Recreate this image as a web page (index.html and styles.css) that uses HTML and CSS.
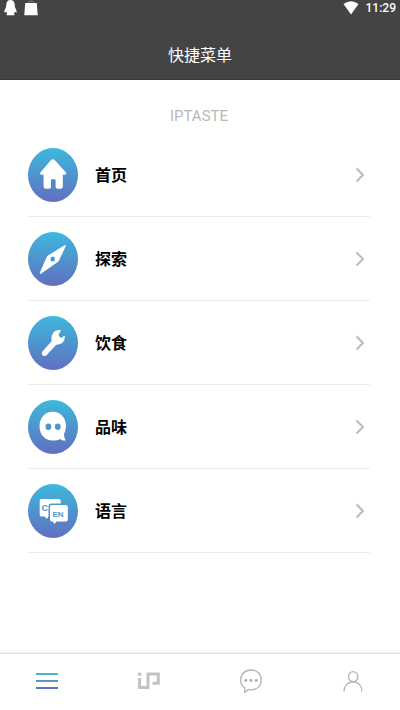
FILE: index.html
```html
<!DOCTYPE html>
<html lang="zh-CN">
<head>
<meta charset="utf-8">
<meta name="viewport" content="width=device-width, initial-scale=1">
<title>快捷菜单</title>
<link rel="stylesheet" href="styles.css">
</head>
<body>
<header class="header">
  <div class="status">
    <div class="status-group">
      <svg width="13" height="16" viewBox="0 0 13 16" fill="#fff" aria-hidden="true"><path d="M6.500 0C3.500 0 2.300 2 2.300 5L1.900 7.500C.8 9.500 .3 11 .3 12.300c.7.500 1.300-.2 2-.8.200 1 .6 1.700 1 2.200-.7.400-.8.900-.6 1.500h7.800c.2-.6.100-1.100-.6-1.500.4-.5.8-1.200 1-2.200.7.600 1.300 1.300 1.800.8 0-1.300-.5-2.800-1.600-4.800L10.700 5C10.700 2 9.500 0 6.500 0z"/></svg>
      <svg width="14" height="16" viewBox="0 0 14 16" aria-hidden="true"><path d="M1.200 3h11.600l.9 12.200H.3z" fill="#fff"/><path d="M4 3C4.500.5 9.500.5 10 3" fill="none" stroke="#888"/></svg>
    </div>
    <div class="status-group">
      <svg width="16" height="16" viewBox="0 0 16 16" fill="#fff" aria-hidden="true"><path d="M.5 4Q8-1.500 15.500 4L8 14.500z"/></svg>
      <span class="clock">11:29</span>
    </div>
  </div>
  <h1 class="title">快捷菜单</h1>
</header>

<main class="main">
  <h2 class="brand">IPTASTE</h2>
  <nav class="menu" aria-label="快捷菜单">
    <a class="item" href="#home">
      <span class="badge"><svg viewBox="0 0 49 54" aria-hidden="true"><path d="M22.300 12.200q2-1.700 4 0L37.500 24.500q.9 2-1.200 2.200h-2V38.500q0 2.200-2.200 2.200h-3q-2 0-2-2V32q0-.8-.8-.8h-3q-.8 0-.8.800v6.700q0 2-2 2h-3.200q-2.200 0-2.200-2.200V26.700h-2q-2.300-.2-1.200-2.200z"/></svg></span>
      <span class="label">首页</span>
      <svg class="arrow" viewBox="0 0 10 16" aria-hidden="true"><path d="M1.500 1.500 8 8l-6.500 6.500"/></svg>
    </a>
    <a class="item" href="#explore">
      <span class="badge"><svg viewBox="0 0 49 54" aria-hidden="true"><path fill-rule="evenodd" d="M36 13.200q1.500-.5 1.100 1.200L30.500 28.500q-.3.800-.9 1.200L12.800 41.500q-1.800.8-1.400-1L18.200 25q.3-.7.900-1.200zM24.200 24.600a2.300 2.500 0 1 0 0 5 2.300 2.500 0 1 0 0-5z"/></svg></span>
      <span class="label">探索</span>
      <svg class="arrow" viewBox="0 0 10 16" aria-hidden="true"><path d="M1.500 1.500 8 8l-6.500 6.500"/></svg>
    </a>
    <a class="item" href="#food">
      <span class="badge"><svg viewBox="0 0 49 54" aria-hidden="true"><path d="M32.500 14.500 30.400 18q-.5.700 0 1.400l1.300 2q.6.700 1.400.3l3.100-2.100c.7 4.700-2 8.700-6.300 8.800-1.300 0-2 .1-2.700.9L18 39.200c-2.700 2.500-6.100-.9-4.100-3.700l8.500-9.500c.7-.8.700-1.500.6-2.600-.5-5.900 4.300-10.700 9.500-8.900z"/></svg></span>
      <span class="label">饮食</span>
      <svg class="arrow" viewBox="0 0 10 16" aria-hidden="true"><path d="M1.500 1.500 8 8l-6.500 6.500"/></svg>
    </a>
    <a class="item" href="#taste">
      <span class="badge"><svg viewBox="0 0 49 54" aria-hidden="true"><path fill-rule="evenodd" d="M24.200 11.800c7.500 0 13.300 6 13.300 14.200 0 3.200-.8 5.700-2 8 .1 2.500.5 4.200 1.700 5.700.3.700-.2 1-1 .9-2 0-3.300-.5-4.500-1.500-2 1-4.500 1.500-7.500 1.500C16.500 40.600 11 34.500 11 26.200s5.700-14.400 13.200-14.400zM19.900 23.600a2.900 3.200 0 1 0 0 6.400 2.900 3.200 0 1 0 0-6.400zM29.300 23.600a2.900 3.200 0 1 0 0 6.400 2.900 3.200 0 1 0 0-6.400z"/></svg></span>
      <span class="label">品味</span>
      <svg class="arrow" viewBox="0 0 10 16" aria-hidden="true"><path d="M1.500 1.500 8 8l-6.500 6.500"/></svg>
    </a>
    <a class="item" href="#language">
      <span class="badge"><svg viewBox="0 0 49 54" aria-hidden="true"><path d="M13 15h17.500q1.700 0 1.700 1.800v2.700H23q-3 0-3 3.300v9.700l-1.700 2.500-2-2.500H13q-1.800 0-1.800-2V17q0-2 1.800-2z"/><path d="M23.300 20.900h14q2 0 2 2v12.700q0 2-2 2H28l-2 2.500-1.700-2.500h-1q-1.800 0-1.800-2V22.900q0-2 1.800-2z"/><text class="glyph-c" x="13" y="27">C</text><text class="glyph-en" x="24" y="32.500">EN</text></svg></span>
      <span class="label">语言</span>
      <svg class="arrow" viewBox="0 0 10 16" aria-hidden="true"><path d="M1.500 1.500 8 8l-6.500 6.500"/></svg>
    </a>
  </nav>
</main>

<nav class="tabs" aria-label="主导航">
  <a class="tab" href="#menu" aria-label="菜单">
    <svg width="24" height="26" viewBox="0 0 24 26" aria-hidden="true"><path d="M1 6h22" stroke="#50b1cd" stroke-width="2"/><path d="M1 13h22" stroke="#5b96c4" stroke-width="2"/><path d="M1 20h22" stroke="#6476b5" stroke-width="2"/></svg>
  </a>
  <a class="tab" href="#ip" aria-label="IP">
    <svg width="24" height="26" viewBox="0 0 24 26" fill="none" stroke="#c2c2c2" stroke-width="3" aria-hidden="true"><path d="M1 6.200h3.500M2.600 10v9.400H11V5.900h10.300v9.300h-5.800"/></svg>
  </a>
  <a class="tab" href="#messages" aria-label="消息">
    <svg width="24" height="26" viewBox="0 0 24 26" fill="none" stroke="#b4b4b4" stroke-width="1.300" aria-hidden="true"><path d="M5.800 19.800C3 18 1.700 15.300 1.700 12 1.700 6.100 6 2 12 2s10.300 4.100 10.300 10S18 21.800 12 21.800c-1 0-1.800-.1-2.600-.4L5.700 24.500z" stroke-linejoin="round"/><g fill="#aaa" stroke="none"><circle cx="6.800" cy="12.500" r="1.400"/><circle cx="12" cy="12.500" r="1.400"/><circle cx="17.200" cy="12.500" r="1.400"/></g></svg>
  </a>
  <a class="tab" href="#profile" aria-label="我的">
    <svg width="24" height="26" viewBox="0 0 24 26" fill="none" stroke="#b4b4b4" stroke-width="1.300" aria-hidden="true"><ellipse cx="12.200" cy="8.700" rx="4.700" ry="5.100"/><path d="M3 23.500c0-5.500 3.700-9.600 9.200-9.600s8.800 4.100 8.800 9.600"/></svg>
  </a>
</nav>
</body>
</html>
```

FILE: styles.css
```css
* {
  box-sizing: border-box;
}

body {
  margin: 0;
  min-height: 100vh;
  display: flex;
  flex-direction: column;
  background: #fff;
  color: #000;
  font-family: Roboto, "Noto Sans CJK SC", sans-serif;
}

.header {
  background: #444;
  border-bottom: 1px solid #383838;
  color: #fff;
}

.status {
  display: flex;
  justify-content: space-between;
  padding: 0 4px;
}

.status-group {
  display: flex;
  gap: 7px;
}

.clock {
  font-size: 12px;
  font-weight: 500;
  line-height: 16px;
}

.title {
  margin: 0;
  padding: 28px 0 11px;
  font-size: 16px;
  font-weight: 400;
  line-height: 24px;
  text-align: center;
}

.main {
  flex: 1;
  padding: 24px 30px 24px 28px;
}

.brand {
  margin: 0 0 4px;
  color: #b8b8b8;
  font-size: 15px;
  font-weight: 400;
  line-height: 25px;
  text-align: center;
}

.item {
  display: flex;
  align-items: center;
  height: 84px;
  padding-right: 5px;
  border-bottom: 1px solid #ebebeb;
  color: inherit;
  text-decoration: none;
}

.badge {
  width: 50px;
  height: 54px;
  border-radius: 50%;
  background: linear-gradient(#3cb9dc, #616fc0);
}

.badge svg {
  display: block;
  width: 100%;
  height: 100%;
  fill: #fff;
}

.badge text {
  fill: #4c98ce;
  font-family: "Liberation Sans", sans-serif;
  font-weight: 700;
}

.glyph-c {
  font-size: 9px;
}

.glyph-en {
  font-size: 8px;
}

.label {
  flex: 1;
  padding: 2px 0 0 17px;
  font-size: 16px;
  font-weight: 700;
  line-height: 24px;
}

.arrow {
  width: 10px;
  height: 16px;
  fill: none;
  stroke: #bbb;
  stroke-width: 2;
}

.tabs {
  display: flex;
  justify-content: space-between;
  padding: 14px 35px 16px;
  border-top: 1px solid #e0e0e0;
  box-shadow: 0 -1px 3px #e8e8e8;
}

.tab {
  display: block;
  height: 26px;
}
```
